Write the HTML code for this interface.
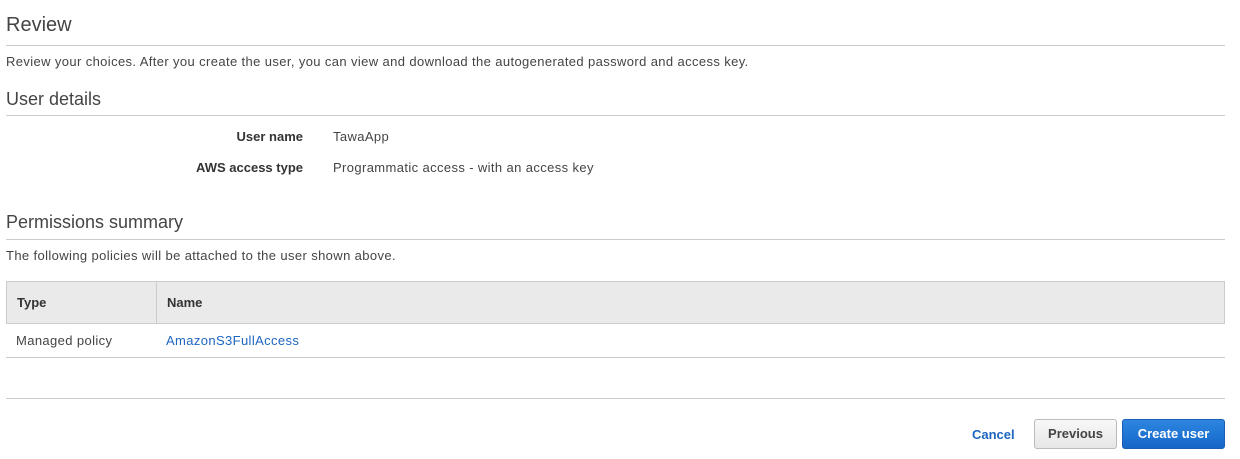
<!DOCTYPE html>
<html><head><style>
body{margin:0;width:1240px;height:459px;background:#fff;font-family:"Liberation Sans",Arial,sans-serif;color:#444;position:relative;overflow:hidden}
.a{position:absolute;white-space:nowrap}
.h{font-size:20px;color:#444}
.hr{position:absolute;left:6px;width:1219px;height:1px;background:#ccc}
.t{font-size:13px;color:#444;letter-spacing:0.38px}
.b{font-weight:bold;color:#333;font-size:13px}
</style></head><body>
<div class="a h" style="left:6px;top:14px">Review</div>
<div class="hr" style="top:45px"></div>
<div class="a t" style="left:6px;top:54px">Review your choices. After you create the user, you can view and download the autogenerated password and access key.</div>
<div class="a h" style="left:6px;top:89px;font-size:18px">User details</div>
<div class="hr" style="top:115px"></div>
<div class="a b" style="right:937px;top:129px">User name</div>
<div class="a t" style="left:333px;top:129px">TawaApp</div>
<div class="a b" style="right:937px;top:160px">AWS access type</div>
<div class="a t" style="left:333px;top:160px">Programmatic access - with an access key</div>
<div class="a h" style="left:6px;top:212px;font-size:18px">Permissions summary</div>
<div class="hr" style="top:239px"></div>
<div class="a t" style="left:6px;top:248px">The following policies will be attached to the user shown above.</div>
<div style="position:absolute;left:6px;top:281px;width:1217px;height:41px;background:#eaeaea;border:1px solid #ccc"></div>
<div style="position:absolute;left:156px;top:282px;width:1px;height:41px;background:#ccc"></div>
<div class="a b" style="left:17px;top:295px">Type</div>
<div class="a b" style="left:167px;top:295px">Name</div>
<div class="a t" style="left:16px;top:333px">Managed policy</div>
<div class="a t" style="left:166px;top:333px;color:#1d66c1">AmazonS3FullAccess</div>
<div class="hr" style="top:357px"></div>
<div class="hr" style="top:398px"></div>
<div class="a" style="left:972px;top:427px;font-size:13px;font-weight:bold;color:#1d66c1">Cancel</div>
<div class="a" style="left:1034px;top:419px;width:83px;height:30px;box-sizing:border-box;border:1px solid #bbb;border-radius:3px;background:linear-gradient(#f8f8f8,#e6e6e6);font-size:13px;font-weight:bold;color:#444;text-align:center;line-height:28px">Previous</div>
<div class="a" style="left:1122px;top:419px;width:103px;height:30px;box-sizing:border-box;border:1px solid #1a5fb4;border-radius:3px;background:linear-gradient(#2d86e0,#1566c8);font-size:13px;font-weight:bold;color:#fff;text-align:center;line-height:28px">Create user</div>
</body></html>
